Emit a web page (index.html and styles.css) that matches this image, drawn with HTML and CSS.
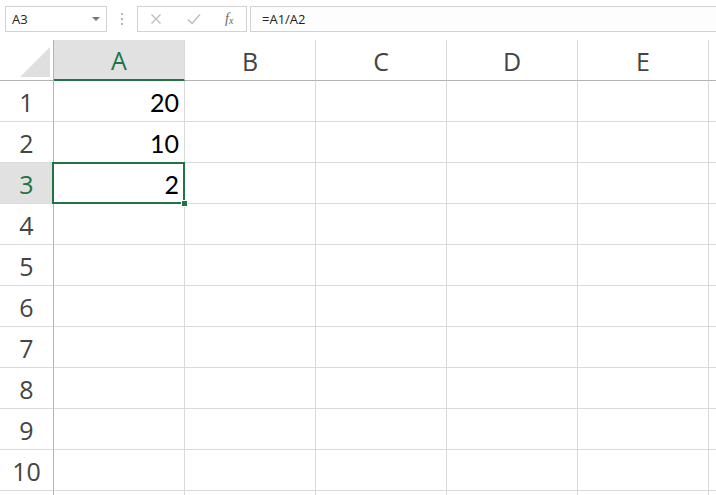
FILE: index.html
```html
<!DOCTYPE html>
<html>
<head>
<meta charset="utf-8">
<link rel="stylesheet" href="styles.css">
</head>
<body>
<div class="toolbar">
  <div class="namebox"><span class="ref">A3</span><span class="caret"></span></div>
  <div class="dots"><i></i><i></i><i></i></div>
  <div class="fbtns">
    <svg class="ico" width="12" height="12" viewBox="0 0 12 12"><path d="M1.5 1.5 L10.5 10.5 M10.5 1.5 L1.5 10.5" stroke="#bdbdbd" stroke-width="1.3" fill="none"/></svg>
    <svg class="ico" width="14" height="12" viewBox="0 0 14 12"><path d="M1 6.5 L5 10.5 L13 1.5" stroke="#bdbdbd" stroke-width="1.5" fill="none"/></svg>
    <span class="fx">f<sub>x</sub></span>
  </div>
  <div class="formula">=A1/A2</div>
</div>
<div class="sheet">
  <div class="corner"><svg width="30" height="30" viewBox="0 0 30 30"><polygon points="0,30 30,30 30,0" fill="#dfdfdf"/></svg></div>
  <div class="ch sel">A</div><div class="ch">B</div><div class="ch">C</div><div class="ch">D</div><div class="ch">E</div><div class="ch"></div>

  <div class="rh">1</div><div class="c num">20</div><div class="c"></div><div class="c"></div><div class="c"></div><div class="c"></div><div class="c"></div>
  <div class="rh">2</div><div class="c num">10</div><div class="c"></div><div class="c"></div><div class="c"></div><div class="c"></div><div class="c"></div>
  <div class="rh sel">3</div><div class="c num active">2<span class="selbox"><span class="handle"></span></span></div><div class="c"></div><div class="c"></div><div class="c"></div><div class="c"></div><div class="c"></div>
  <div class="rh">4</div><div class="c"></div><div class="c"></div><div class="c"></div><div class="c"></div><div class="c"></div><div class="c"></div>
  <div class="rh">5</div><div class="c"></div><div class="c"></div><div class="c"></div><div class="c"></div><div class="c"></div><div class="c"></div>
  <div class="rh">6</div><div class="c"></div><div class="c"></div><div class="c"></div><div class="c"></div><div class="c"></div><div class="c"></div>
  <div class="rh">7</div><div class="c"></div><div class="c"></div><div class="c"></div><div class="c"></div><div class="c"></div><div class="c"></div>
  <div class="rh">8</div><div class="c"></div><div class="c"></div><div class="c"></div><div class="c"></div><div class="c"></div><div class="c"></div>
  <div class="rh">9</div><div class="c"></div><div class="c"></div><div class="c"></div><div class="c"></div><div class="c"></div><div class="c"></div>
  <div class="rh">10</div><div class="c"></div><div class="c"></div><div class="c"></div><div class="c"></div><div class="c"></div><div class="c"></div>
  <div class="rh"></div><div class="c"></div><div class="c"></div><div class="c"></div><div class="c"></div><div class="c"></div><div class="c"></div>
</div>
</body>
</html>
```
FILE: styles.css
```css
html, body {
  margin: 0;
  padding: 0;
  background: #fff;
  overflow: hidden;
  width: 716px;
  height: 495px;
}
body {
  font-family: "Open Sans", "Noto Sans", sans-serif;
}
.toolbar {
  height: 40px;
  box-sizing: border-box;
  padding: 6px 0 0 5px;
  display: flex;
  align-items: flex-start;
  background: #fff;
}
.namebox {
  width: 102px;
  height: 26px;
  box-sizing: border-box;
  border: 1px solid #d2d2d2;
  display: flex;
  align-items: center;
  justify-content: space-between;
  padding: 0 6px 1px 6px;
  font-size: 13px;
  color: #222;
}
.caret {
  width: 0;
  height: 0;
  border-left: 4px solid transparent;
  border-right: 4px solid transparent;
  border-top: 4px solid #777;
  margin-top: 1px;
}
.dots {
  width: 30px;
  height: 26px;
  display: flex;
  flex-direction: column;
  align-items: center;
  justify-content: center;
  gap: 3px;
}
.dots i {
  display: block;
  width: 2px;
  height: 2px;
  background: #b5b5b5;
}
.fbtns {
  width: 110px;
  height: 26px;
  box-sizing: border-box;
  border: 1px solid #d2d2d2;
  display: flex;
  align-items: center;
  padding-left: 12px;
}
.fbtns .ico { flex: none; }
.fbtns .ico + .ico { margin-left: 25px; }
.fx {
  margin-left: 24px;
  font-family: "Liberation Serif", serif;
  font-style: italic;
  font-size: 14px;
  color: #666;
  line-height: 1;
}
.fx sub {
  font-size: 10px;
  vertical-align: -1px;
}
.formula {
  flex: 1;
  margin-left: 3px;
  margin-right: -4px;
  height: 26px;
  box-sizing: border-box;
  border: 1px solid #d2d2d2;
  background: #fdfdfd;
  font-size: 13px;
  color: #222;
  padding: 0 0 1px 11px;
  display: flex;
  align-items: center;
}
.sheet {
  display: grid;
  grid-template-columns: 54px repeat(6, 131px);
  grid-auto-rows: 41px;
  height: 455px;
  overflow: hidden;
}
.sheet > div {
  box-sizing: border-box;
  border-right: 1px solid #dadada;
  border-bottom: 1px solid #dadada;
}
.corner {
  display: flex;
  align-items: flex-end;
  justify-content: flex-end;
  padding: 0 3px 3px 0;
  border-right-color: #b3b3b3 !important;
  border-bottom-color: #b3b3b3 !important;
}
.corner svg { display: block; }
.ch {
  font-size: 25px;
  color: #444;
  text-align: center;
  line-height: 40px;
  padding-top: 1px;
  border-bottom-color: #b3b3b3 !important;
}
.ch.sel {
  background: #e1e1e1;
  color: #217346;
  border-bottom: 2px solid #217346 !important;
  line-height: 39px;
}
.rh {
  font-size: 25px;
  color: #444;
  text-align: center;
  line-height: 40px;
  padding-top: 1px;
  border-right-color: #b3b3b3 !important;
}
.rh.sel {
  background: #e1e1e1;
  color: #217346;
}
.c.num {
  font-family: Lato, "Open Sans", sans-serif;
  font-size: 25px;
  color: #000;
  text-align: right;
  line-height: 40px;
  padding: 1px 5px 0 0;
}
.c.active {
  position: relative;
}
.selbox {
  position: absolute;
  left: -2px;
  top: -1px;
  right: -1px;
  bottom: -1px;
  border: 2px solid #217346;
}
.handle {
  position: absolute;
  right: -4px;
  bottom: -4px;
  width: 5px;
  height: 5px;
  background: #217346;
  outline: 1px solid #fff;
}
```
